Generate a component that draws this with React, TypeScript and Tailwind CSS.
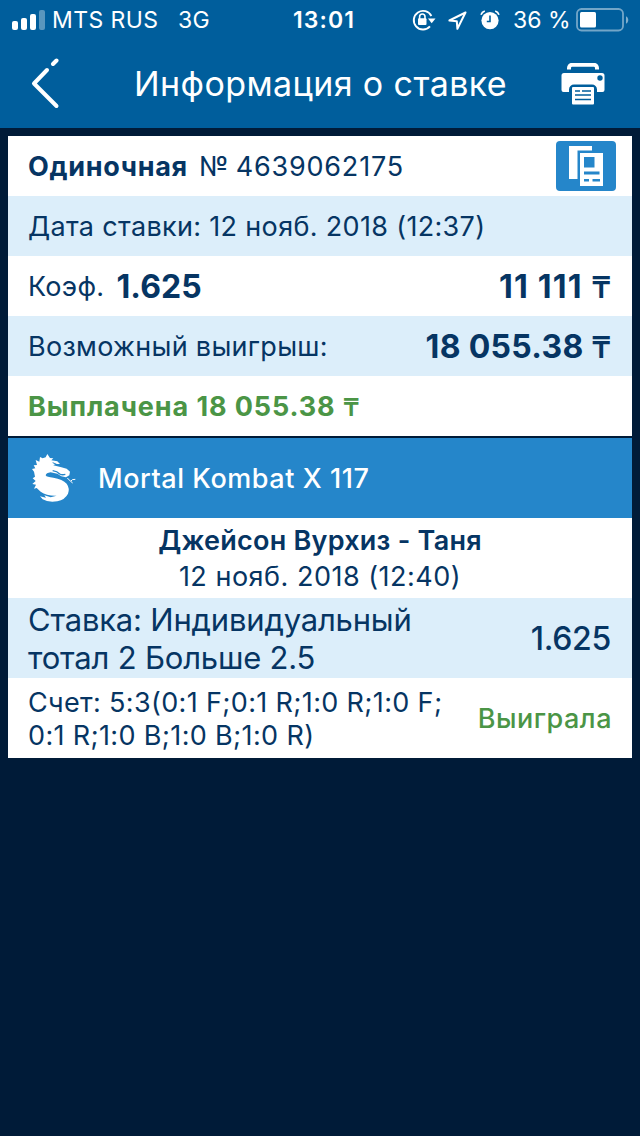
import type { ReactNode } from "react";

function StatusBar() {
  return (
    <div className="flex h-10 items-center pl-3 pr-[11px] text-[23px]">
      {/* Carrier */}
      <div className="flex w-[281px] items-center">
        <svg width="34" height="20" viewBox="0 0 34 20" fill="currentColor">
          <rect x="0" y="11" width="6" height="9" rx="2" />
          <rect x="9" y="8" width="6" height="12" rx="2" />
          <rect x="18" y="4" width="6" height="16" rx="2" />
          <rect x="27" y="0" width="6" height="20" rx="2" opacity="0.35" />
        </svg>
        <span className="ml-[6px] w-[126px] whitespace-nowrap pt-px tracking-[0.4px]">MTS RUS</span>
        <span className="whitespace-nowrap pt-px tracking-[0.2px]">3G</span>
      </div>

      <span className="w-[119px] whitespace-nowrap pt-px font-semibold tracking-[1.1px]">13:01</span>

      {/* Indicators */}
      <div className="flex items-center">
        <svg width="24" height="22" viewBox="0 0 24 22" fill="none">
          <path d="M19.4 7A9.3 9.3 0 1 0 18 17.4" stroke="currentColor" strokeWidth="1.9" />
          <path d="M16 9.5h7.5l-3.8 4.7z" fill="currentColor" />
          <rect x="6" y="9.3" width="8.5" height="6.8" rx="1" fill="currentColor" />
          <path d="M7.6 10V7.7a2.7 2.7 0 0 1 5.4 0V10" stroke="currentColor" strokeWidth="1.6" />
        </svg>
        <svg className="ml-[12px]" width="19" height="19" viewBox="0 0 19 19" fill="none" stroke="currentColor" strokeWidth="2" strokeLinejoin="round">
          <path d="M17.5 1.5L1.4 9.5l7.4.7.6 7.6z" />
        </svg>
        <svg className="ml-[13px]" width="20" height="20" viewBox="0 0 20 20" fill="none">
          <circle cx="10" cy="10.6" r="8.6" fill="currentColor" />
          <path d="M1 4.7A6 6 0 0 1 4.8 1M19 4.7A6 6 0 0 0 15.2 1" stroke="currentColor" strokeWidth="1.7" />
          <path d="M10 5.5v6H6.8" stroke="#005e9c" strokeWidth="1.6" />
        </svg>
        <span className="ml-[13px] w-[63px] whitespace-nowrap pt-px">36 %</span>
        <svg width="53" height="24" viewBox="0 0 53 24" fill="none">
          <rect x="1" y="1" width="46" height="21.5" rx="4.5" stroke="currentColor" strokeWidth="1.8" opacity="0.45" />
          <rect x="4" y="4" width="16" height="15.5" rx="1.5" fill="currentColor" />
          <path d="M50 8.2c3 1.5 3 6 0 7.5z" fill="currentColor" opacity="0.5" />
        </svg>
      </div>
    </div>
  );
}

function PrinterIcon() {
  return (
    <svg width="44" height="42" viewBox="0 0 44 42" fill="none">
      <path d="M8 6.5V5a3.2 3.2 0 0 1 3.2-3.2h21.6A3.2 3.2 0 0 1 36 5v1.5" stroke="#fff" strokeWidth="4" />
      <path
        d="M3 10h38a2.5 2.5 0 0 1 2.5 2.5V27a2 2 0 0 1-2 2H36v-2.5a5 5 0 0 0-5-5H13a5 5 0 0 0-5 5V29H2.5a2 2 0 0 1-2-2V12.5A2.5 2.5 0 0 1 3 10z"
        fill="#fff"
      />
      <circle cx="39" cy="15" r="2.7" fill="#005e9c" />
      <rect x="11" y="24" width="22" height="17.5" rx="1" fill="#fff" />
      <path d="M14 28h5M21 28h9M14 32h16M14 36.5h16" stroke="#005e9c" strokeWidth="1.7" />
    </svg>
  );
}

function CouponIcon() {
  return (
    <svg width="60" height="50" viewBox="0 0 60 50">
      <rect width="60" height="50" rx="4" fill="#2586ca" />
      <path d="M13 5h23v4.5H21.5V38H13z" fill="#fff" />
      <path d="M24 12h23v33H24z" fill="#fff" />
      <path d="M28 16h10.5v10.5H28zM28 30.5h15.5v3H28zM28 38h5v2.5h-5zM36.5 38H44v2.5h-7.5z" fill="#2586ca" />
    </svg>
  );
}

function DragonIcon() {
  return (
    <svg width="44" height="49" viewBox="36 27 132 147" fill="#fff">
      <path d="M82 27L90 39L100 40L94 46L112 49L120 57L106 57L100 61L124 67L140 71L150 80L148 91L138 97L124 94L112 86L92 82Q78 84 77 91Q80 97 100 98Q128 102 140 116Q150 130 144 146Q135 164 112 169Q84 173 68 163L60 154L78 158L73 151L92 157L110 152Q80 153 62 140L50 129L42 131L48 119L37 117L47 108L38 100L45 95L42 80L36 72L46 70L41 61L51 60L47 45L58 50L60 36L68 40L77 37Z" />
      <path d="M98 77Q112 79 119 87Q127 91 136 88" fill="none" stroke="#2586ca" strokeWidth="4" />
      <path d="M98 53L110 58" stroke="#2586ca" strokeWidth="3" />
      <path d="M142 99L152 109L157 104L166 103M152 109L158 114" fill="none" stroke="#fff" strokeWidth="3" />
    </svg>
  );
}

function Tenge() {
  return <span className="text-[0.92em] font-semibold tracking-normal">₸</span>;
}

function Row({ tinted, children }: { tinted?: boolean; children: ReactNode }) {
  return (
    <div className={`flex h-[60px] items-center justify-between pl-5 pr-[21px] pt-0.5 ${tinted ? "bg-[#dceefa]" : "bg-white"}`}>
      {children}
    </div>
  );
}

export default function App() {
  return (
    <main className="min-h-[1136px] w-[640px] overflow-hidden bg-[#001b38] font-['Inter','Liberation_Sans',sans-serif] text-[#063563]">
      {/* Header */}
      <header className="h-32 bg-[#005e9c] text-white">
        <StatusBar />
        <div className="flex h-[88px] items-center pl-[30px] pr-[35px]">
          <svg width="32" height="52" viewBox="0 0 32 52" fill="none" stroke="currentColor" strokeWidth="4" strokeLinecap="round" strokeLinejoin="round">
            <path d="M26.5 48L4 25.5 17 12" />
            <path d="M23 6l3.500-3.500" />
          </svg>
          <h1 className="ml-[72px] w-[427px] whitespace-nowrap pb-0.5 text-[34px] tracking-[0.4px]">Информация о ставке</h1>
          <PrinterIcon />
        </div>
      </header>

      {/* Bet summary */}
      <section className="mx-2 mt-2">
        <div className="flex h-[60px] items-center bg-white pl-5 pr-4">
          <span className="w-[171px] whitespace-nowrap pt-0.5 text-[27px] font-bold tracking-[0.7px]">Одиночная</span>
          <span className="flex-1 whitespace-nowrap pt-0.5 text-[27px] tracking-[0.8px] [word-spacing:-2px]">№ 4639062175</span>
          <CouponIcon />
        </div>
        <Row tinted>
          <span className="whitespace-nowrap text-[27px] tracking-[0.33px]">Дата ставки: 12 нояб. 2018 (12:37)</span>
        </Row>
        <Row>
          <span className="flex items-center whitespace-nowrap text-[27px] tracking-[0.3px]">
            Коэф.<b className="ml-[12px] text-[32px] tracking-[0.1px]">1.625</b>
          </span>
          <b className="whitespace-nowrap text-[32px] tracking-[1.2px]">
            11 111 <Tenge />
          </b>
        </Row>
        <Row tinted>
          <span className="whitespace-nowrap text-[27px] tracking-[0.3px]">Возможный выигрыш:</span>
          <b className="whitespace-nowrap text-[32px] tracking-[0.3px]">
            18 055.38 <Tenge />
          </b>
        </Row>
        <Row>
          <b className="whitespace-nowrap text-[27px] tracking-[0.9px] text-[#4b9546]">
            Выплачена 18 055.38 <Tenge />
          </b>
        </Row>
      </section>

      {/* Event */}
      <section className="mx-2 mt-[2px]">
        <div className="flex h-20 items-center bg-[#2586ca] pl-6 text-white">
          <DragonIcon />
          <h2 className="ml-[22px] whitespace-nowrap pt-0.5 text-[27px] font-medium tracking-[0.55px]">Mortal Kombat X 117</h2>
        </div>
        <div className="h-20 bg-white pt-[5px] text-center leading-9">
          <p className="text-[27px] font-semibold tracking-[0.25px]">Джейсон Вурхиз - Таня</p>
          <p className="text-[27px] tracking-[0.5px]">12 нояб. 2018 (12:40)</p>
        </div>
        <div className="flex h-20 items-center justify-between bg-[#dceefa] pl-5 pr-[21px]">
          <p className="whitespace-nowrap pt-px text-[31px] leading-[38px] tracking-[-0.2px]">
            Ставка: Индивидуальный
            <br />
            тотал 2 Больше 2.5
          </p>
          <span className="pt-px text-[32px] font-medium tracking-[-0.3px]">1.625</span>
        </div>
        <div className="flex h-20 items-center justify-between bg-white pl-5 pr-[20px]">
          <p className="whitespace-nowrap pt-[2px] text-[27px] leading-[33px] tracking-[0.35px]">
            Счет: 5:3(0:1 F;0:1 R;1:0 R;1:0 F;
            <br />
            0:1 R;1:0 B;1:0 B;1:0 R)
          </p>
          <span className="pt-0.5 text-[27px] font-medium tracking-[0.5px] text-[#4b9546]">Выиграла</span>
        </div>
      </section>
    </main>
  );
}
